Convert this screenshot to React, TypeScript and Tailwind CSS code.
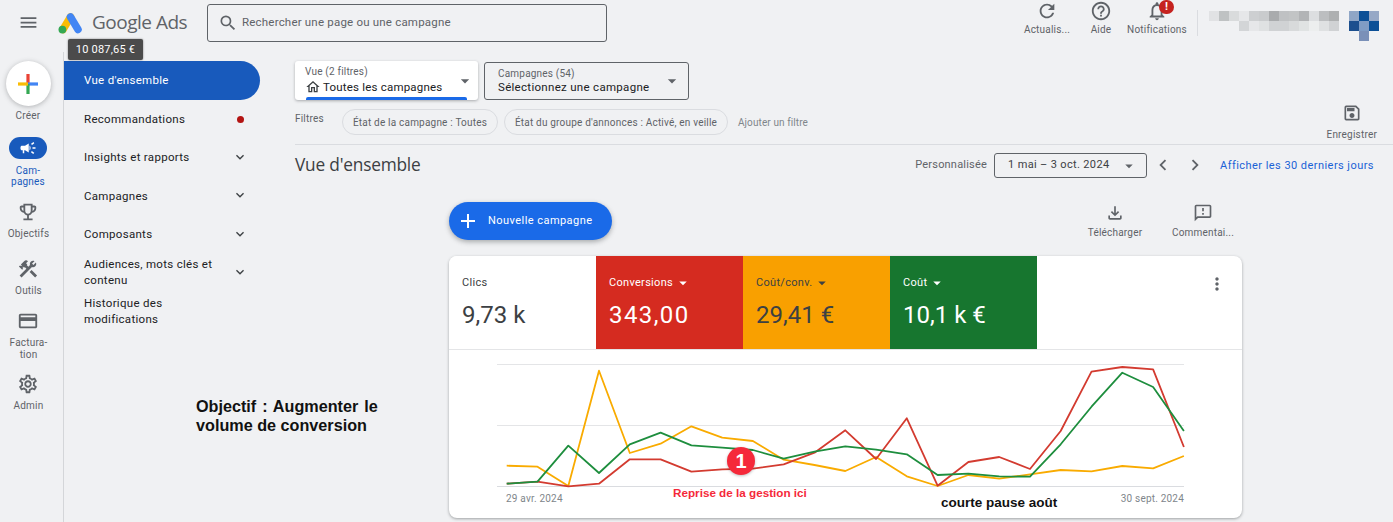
import type { ReactNode } from "react";
import {
  MdAdd,
  MdArrowDropDown,
  MdCampaign,
  MdChevronLeft,
  MdChevronRight,
  MdConstruction,
  MdHelpOutline,
  MdKeyboardArrowDown,
  MdMenu,
  MdMoreVert,
  MdNotificationsNone,
  MdOutlineCreditCard,
  MdOutlineEmojiEvents,
  MdOutlineFeedback,
  MdOutlineFileDownload,
  MdOutlineHome,
  MdOutlineSave,
  MdOutlineSettings,
  MdRefresh,
  MdSearch,
} from "react-icons/md";

const font = "font-['Roboto','Liberation_Sans',sans-serif]";

// y values read off the chart, 23 points
const orange = [332, 335, 393, 47, 294, 266, 214, 248, 258, 314, 330, 348, 306, 364, 393, 360, 371, 358, 345, 349, 333, 340, 303];
const red = [386, 380, 394, 386, 313, 313, 350, 343, 341, 328, 293, 226, 312, 190, 392, 321, 306, 342, 228, 50, 36, 43, 276];
const green = [386, 380, 272, 354, 268, 233, 271, 278, 285, 311, 290, 274, 284, 298, 360, 356, 364, 365, 268, 155, 53, 96, 228];

function points(values: number[]) {
  return values.map((v, i) => `${(57.7 + i * 30.78).toFixed(1)},${(6 + v / 3).toFixed(1)}`).join(" ");
}

const blurRow1 = ["#e1e2e4", "#bfc2c3", "#d9dbdc", "#e6e7e9", "#cdcfd1", "#c9cbcd", "#a9abad", "#bfc1c3", "#c2c4c5", "#b2b4b6", "#dcdee0", "#bcbec0", "#aeb0b1"];
const blurRow2 = ["#d3d5d7", "#e6e7e9", "#dfe1e2", "#d0d2d4", "#d0d2d4", "#d8dadb", "#e0e3e3", "#eceeee", "#dfe1e2", "#d0d2d4"];

function GoogleAdsLogo() {
  return (
    <svg width="25" height="22" viewBox="0 0 25 22">
      <line x1="12.5" y1="5" x2="5" y2="17.5" stroke="#fbbc04" strokeWidth="7.5" strokeLinecap="round" />
      <line x1="12.5" y1="5" x2="20" y2="17.5" stroke="#4285f4" strokeWidth="7.5" strokeLinecap="round" />
      <circle cx="4.4" cy="17.6" r="3.9" fill="#34a853" />
    </svg>
  );
}

function ColorPlus() {
  return (
    <svg width="22" height="22" viewBox="0 0 22 22">
      <rect x="9.4" y="1" width="3.2" height="10" fill="#ea4335" />
      <rect x="11" y="9.4" width="10" height="3.2" fill="#4285f4" />
      <rect x="9.4" y="11" width="3.2" height="10" fill="#34a853" />
      <rect x="1" y="9.4" width="10" height="3.2" fill="#fbbc04" />
    </svg>
  );
}

function BlurredAccount() {
  return (
    <svg width="170" height="31" viewBox="0 0 170 31" className="block">
      {blurRow1.map((c, i) => (
        <rect key={i} x={i * 10} y="0" width="10" height="10" fill={c} />
      ))}
      {blurRow2.map((c, i) => (
        <rect key={i} x={30 + i * 10} y="10" width="10" height="10" fill={c} />
      ))}
      <rect x="140" y="0" width="10" height="10" fill="#8fa6c6" />
      <rect x="150" y="0" width="10" height="10" fill="#0b4f96" />
      <rect x="160" y="0" width="10" height="10" fill="#96a8c6" />
      <rect x="140" y="10" width="10" height="10" fill="#1c4f8e" />
      <rect x="150" y="10" width="10" height="10" fill="#7f9cc4" />
      <rect x="160" y="10" width="10" height="10" fill="#0b4f96" />
      <rect x="150" y="20" width="10" height="10" fill="#7a90b8" />
    </svg>
  );
}

function TopAction({ icon, label, w }: { icon: ReactNode; label: string; w: string }) {
  return (
    <div className={`flex flex-col items-center ${w}`}>
      <div className="h-[22px] flex items-center justify-center text-[#5f6368]">{icon}</div>
      <div className="mt-[2px] text-[10px] leading-[12px] tracking-[0.2px] text-[#5f6368] whitespace-nowrap">{label}</div>
    </div>
  );
}

function RailItem({ icon, children, h }: { icon: ReactNode; children: ReactNode; h: string }) {
  return (
    <div className={`flex flex-col items-center ${h}`}>
      <div className="h-[24px] flex items-center justify-center text-[#5f6368]">{icon}</div>
      <div className="mt-[4px] text-center text-[10px] leading-[12px] tracking-[0.2px] text-[#5f6368]">{children}</div>
    </div>
  );
}

function NavItem({ children, h, arrow = true }: { children: ReactNode; h: string; arrow?: boolean }) {
  return (
    <div className={`flex items-center w-[196px] pl-[20px] pr-[12px] text-[11.5px] leading-[16px] tracking-[0.3px] text-[#202124] ${h}`}>
      <div className="flex-1">{children}</div>
      {arrow && <MdKeyboardArrowDown size={16} className="text-[#3c4043] mb-[1px]" />}
    </div>
  );
}

function Tile({ label, value, bg, text, valueClass = "", caret = true }: { label: string; value: string; bg: string; text: string; valueClass?: string; caret?: boolean }) {
  return (
    <div className={`w-[147px] h-[93px] pl-[13px] pt-[20px] ${bg} ${text}`}>
      <div className="flex items-center h-[14px] text-[11px] leading-[14px] tracking-[0.3px]">
        {label}
        {caret && <MdArrowDropDown size={18} className="ml-[1px]" />}
      </div>
      <div className={`mt-[9px] text-[24px] leading-[32px] ${valueClass}`}>{value}</div>
    </div>
  );
}

export default function App() {
  return (
    <div className={`relative w-[1393px] h-[522px] overflow-hidden bg-[#f0f1f3] ${font}`}>
      <header className="flex items-center h-[52px] pb-[7px]">
        <div className="w-[58px] pl-[18px]">
          <MdMenu size={21} className="text-[#5f6368]" />
        </div>
        <GoogleAdsLogo />
        <div className="ml-[9px] mb-[2px] w-[115px] text-[19px] leading-[24px] text-[#5f6368] font-['Open_Sans',sans-serif] tracking-[-0.5px]">Google Ads</div>
        <div className="flex items-center w-[400px] h-[38px] border border-[#5f6368] rounded-[3px] pl-[10px]">
          <MdSearch size={20} className="text-[#5f6368]" />
          <span className="ml-[4px] text-[11.5px] tracking-[0.2px] text-[#5f6368]">Rechercher une page ou une campagne</span>
        </div>
        <div className="flex items-start self-start ml-[413px]">
          <TopAction w="w-[54px]" icon={<MdRefresh size={22} />} label="Actualis..." />
          <TopAction w="w-[54px]" icon={<MdHelpOutline size={22} />} label="Aide" />
          <div className="relative w-[58px]">
            <TopAction w="w-[58px]" icon={<MdNotificationsNone size={22} />} label="Notifications" />
            <div className="absolute left-[31px] top-0 w-[15px] h-[14px] rounded-full bg-[#c5221f] text-white text-[11px] leading-[14px] font-bold text-center">!</div>
          </div>
          <div className="ml-[11px] mt-[10px] w-px h-[26px] bg-[#dadce0]" />
          <div className="ml-[11px] mt-[11px]">
            <BlurredAccount />
          </div>
        </div>
      </header>

      <div className="flex h-[470px]">
        <aside className="w-[64px] shrink-0 border-r border-[#d4d6d9] pt-[9px] flex flex-col items-center">
          <div className="w-[45px] h-[45px] rounded-full bg-white shadow-[0_1px_5px_rgba(60,64,67,0.35)] flex items-center justify-center mr-[7px]">
            <ColorPlus />
          </div>
          <div className="mt-[4px] h-[27px] mr-[7px] text-[10px] leading-[12px] tracking-[0.2px] text-[#5f6368]">Créer</div>
          <div className="mr-[7px] w-[38px] h-[22px] rounded-full bg-[#185abc] flex items-center justify-center text-white">
            <MdCampaign size={18} />
          </div>
          <div className="mt-[6px] h-[35px] mr-[7px] text-center text-[10px] leading-[11px] tracking-[0.2px] text-[#185abc]">
            Cam-
            <br />
            pagnes
          </div>
          <div className="mr-[6px] flex flex-col items-center">
            <RailItem h="h-[57px]" icon={<MdOutlineEmojiEvents size={22} />}>Objectifs</RailItem>
            <RailItem h="h-[52px]" icon={<MdConstruction size={22} />}>Outils</RailItem>
            <RailItem h="h-[63px]" icon={<MdOutlineCreditCard size={22} />}>
              Factura-
              <br />
              tion
            </RailItem>
            <RailItem h="h-[40px]" icon={<MdOutlineSettings size={22} />}>Admin</RailItem>
          </div>
        </aside>

        <nav className="w-[231px] shrink-0 pt-[9px]">
          <div className="w-[196px] h-[39px] pl-[20px] flex items-center rounded-r-full bg-[#185abc] text-white text-[11.5px] tracking-[0.3px]">Vue d'ensemble</div>
          <NavItem h="h-[38px]" arrow={false}>
            <div className="flex items-center justify-between pr-[4px]">
              Recommandations
              <span className="w-[7px] h-[7px] rounded-full bg-[#b31412]" />
            </div>
          </NavItem>
          <NavItem h="h-[38px]">Insights et rapports</NavItem>
          <NavItem h="h-[39px]">Campagnes</NavItem>
          <NavItem h="h-[38px]">Composants</NavItem>
          <NavItem h="h-[38px]">
            Audiences, mots clés et
            <br />
            contenu
          </NavItem>
          <NavItem h="h-[40px]" arrow={false}>
            Historique des
            <br />
            modifications
          </NavItem>
        </nav>

        <main className="flex-1 min-w-0 pt-[9px]">
          <div className="flex h-[39px]">
            <div className="relative w-[183px] h-[39px] bg-white rounded-[3px] shadow-[0_1px_3px_rgba(60,64,67,0.4)] pl-[10px] pt-[5px] overflow-hidden">
              <div className="text-[10px] leading-[12px] tracking-[0.2px] text-[#5f6368]">Vue (2 filtres)</div>
              <div className="flex items-center mt-[1px] text-[11.5px] leading-[16px] tracking-[0.2px] text-[#202124]">
                <MdOutlineHome size={16} className="mr-[2px] text-[#3c4043]" />
                Toutes les campagnes
              </div>
              <MdArrowDropDown size={20} className="absolute right-[3px] top-[10px] text-[#5f6368]" />
              <div className="absolute left-[11px] right-[11px] bottom-0 h-[3px] rounded-t-[2px] bg-[#1a6ae8]" />
            </div>
            <div className="relative ml-[6px] w-[205px] h-[38px] mt-[1px] border border-[#5f6368] rounded-[3px] pl-[13px] pt-[5px]">
              <div className="text-[10px] leading-[12px] tracking-[0.2px] text-[#5f6368]">Campagnes (54)</div>
              <div className="mt-[0px] text-[11.5px] leading-[14px] tracking-[0.3px] text-[#202124]">Sélectionnez une campagne</div>
              <MdArrowDropDown size={20} className="absolute right-[6px] top-[8px] text-[#5f6368]" />
            </div>
          </div>

          <div className="relative flex h-[45px] border-b border-[#dadce0] pt-[9px]">
            <div className="w-[47px] pt-[4px] text-[10px] leading-[12px] tracking-[0.2px] text-[#5f6368]">Filtres</div>
            <div className="w-[156px] h-[26px] rounded-full border border-[#dadce0] flex items-center justify-center text-[10px] tracking-[0.2px] text-[#5f6368]">État de la campagne : Toutes</div>
            <div className="ml-[6px] w-[224px] h-[26px] rounded-full border border-[#dadce0] flex items-center justify-center text-[10px] tracking-[0.2px] text-[#5f6368]">État du groupe d'annonces : Activé, en veille</div>
            <div className="ml-[10px] h-[26px] flex items-center text-[10px] tracking-[0.1px] text-[#80868b]">Ajouter un filtre</div>
            <div className="absolute right-[16px] top-[3px] flex flex-col items-center text-[#5f6368]">
              <MdOutlineSave size={20} />
              <div className="mt-[6px] text-[10px] leading-[12px] tracking-[0.2px]">Enregistrer</div>
            </div>
          </div>

          <div className="flex items-center h-[40px] pr-[19px]">
            <div className="text-[17.3px] leading-[24px] text-[#3c4043] font-['Open_Sans',sans-serif] tracking-[-0.2px]">Vue d'ensemble</div>
            <div className="ml-auto mt-[1px] text-[11px] tracking-[0.2px] text-[#5f6368]">Personnalisée</div>
            <div className="ml-[7px] mt-[1px] w-[153px] h-[25px] border border-[#5f6368] rounded-[3px] pl-[13px] pr-[8px] flex items-center justify-between text-[11px] tracking-[0.35px] text-[#3c4043]">
              1 mai – 3 oct. 2024
              <MdArrowDropDown size={18} className="text-[#5f6368]" />
            </div>
            <div className="w-[32px] flex justify-center text-[#5f6368]">
              <MdChevronLeft size={22} />
            </div>
            <div className="w-[32px] flex justify-center text-[#5f6368]">
              <MdChevronRight size={22} />
            </div>
            <div className="ml-[9px] mt-[2px] text-[11px] tracking-[0.45px] text-[#1a62d6]">Afficher les 30 derniers jours</div>
          </div>

          <div className="ml-[154px] w-[793px]">
            <div className="flex items-start h-[71px] pt-[17px]">
              <div className="w-[163px] h-[38px] rounded-full bg-[#1a6ae8] shadow-[0_2px_5px_rgba(60,64,67,0.4)] flex items-center pl-[7px] text-white">
                <MdAdd size={24} />
                <span className="ml-[8px] mt-[1px] text-[11px] tracking-[0.45px]">Nouvelle campagne</span>
              </div>
              <div className="ml-auto -mr-[5px] mt-[1px] flex text-[#5f6368]">
                <div className="w-[88px] flex flex-col items-center">
                  <MdOutlineFileDownload size={20} />
                  <div className="mt-[4px] text-[10px] leading-[12px] tracking-[0.2px]">Télécharger</div>
                </div>
                <div className="w-[88px] flex flex-col items-center">
                  <MdOutlineFeedback size={20} />
                  <div className="mt-[4px] text-[10px] leading-[12px] tracking-[0.2px]">Commentai...</div>
                </div>
              </div>
            </div>

            <section className="relative w-[793px] h-[262px] bg-white rounded-[8px] shadow-[0_1px_3px_rgba(60,64,67,0.45)] overflow-hidden">
              <div className="flex h-[93px] border-b border-[#e4e5e7] box-content">
                <Tile label="Clics" value="9,73 k" bg="bg-white" text="text-[#3c4043]" caret={false} />
                <Tile label="Conversions" value="343,00" bg="bg-[#d52b20]" text="text-white" valueClass="tracking-[1.4px]" />
                <Tile label="Coût/conv." value="29,41 €" bg="bg-[#f9a000]" text="text-[#3c4043]" />
                <Tile label="Coût" value="10,1 k €" bg="bg-[#17762f]" text="text-white" />
                <div className="ml-auto pt-[18px] pr-[15px] text-[#5f6368]">
                  <MdMoreVert size={20} />
                </div>
              </div>
              <svg width="793" height="168" viewBox="0 0 793 168" className="block -mt-px">
                <line x1="48" y1="15.5" x2="735" y2="15.5" stroke="#e4e5e7" />
                <line x1="48" y1="76.5" x2="735" y2="76.5" stroke="#e4e5e7" />
                <line x1="48" y1="137.5" x2="735" y2="137.5" stroke="#dadce0" />
                <polyline points={points(orange)} fill="none" stroke="#f9ab00" strokeWidth="1.8" strokeLinejoin="round" />
                <polyline points={points(red)} fill="none" stroke="#d33b30" strokeWidth="1.8" strokeLinejoin="round" />
                <polyline points={points(green)} fill="none" stroke="#1e8e3e" strokeWidth="1.8" strokeLinejoin="round" />
              </svg>
              <div className="absolute left-[57px] top-[237px] text-[10px] leading-[12px] tracking-[0.2px] text-[#80868b]">29 avr. 2024</div>
              <div className="absolute right-[58px] top-[237px] text-[10px] leading-[12px] tracking-[0.2px] text-[#80868b]">30 sept. 2024</div>
            </section>
          </div>
        </main>
      </div>

      {/* solde sous le logo */}
      <div className="absolute left-[68px] top-[39px] w-[75px] h-[21px] rounded-[2px] bg-[#4b4b4b] shadow-[0_0_2px_rgba(0,0,0,0.5)] text-white text-[11px] leading-[21px] tracking-[0.2px] text-center">10 087,65 €</div>

      {/* annotations posées sur la capture */}
      <div className="absolute left-[196px] top-[397px] text-[16.2px] leading-[19px] font-bold text-[#111] font-['Liberation_Sans',sans-serif]">
        <span className="[word-spacing:1.4px]">Objectif : Augmenter le</span>
        <br />
        volume de conversion
      </div>
      <div className="absolute left-[727px] top-[447px] w-[28px] h-[28px] rounded-full bg-[#f5293a] shadow-[0_1px_3px_rgba(0,0,0,0.25)] text-white text-[20px] leading-[28px] font-bold text-center font-['Liberation_Sans',sans-serif]">1</div>
      <div className="absolute left-[673px] top-[486px] text-[11.7px] leading-[14px] font-bold text-[#f5293a] font-['Liberation_Sans',sans-serif]">Reprise de la gestion ici</div>
      <div className="absolute left-[941px] top-[495px] text-[13.5px] leading-[16px] font-bold text-[#111] font-['Liberation_Sans',sans-serif]">courte pause août</div>
    </div>
  );
}
